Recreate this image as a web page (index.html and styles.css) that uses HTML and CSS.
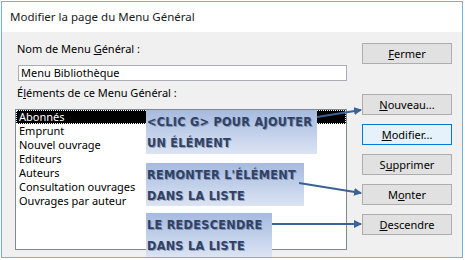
FILE: index.html
```html
<!DOCTYPE html>
<html lang="fr">
<head>
    <meta charset="UTF-8">
    <title>Modifier la page du Menu Général</title>
    <link rel="stylesheet" href="styles.css">
</head>
<body>
    <div class="window">
        <div class="titlebar">Modifier la page du Menu Général</div>
        <div class="dialog">
            <div class="left">
                <div class="lbl">Nom de Menu <u>G</u>énéral :</div>
                <div class="name">Menu Bibliothèque</div>
                <div class="lbl lbl-list">É<u>l</u>éments de ce Menu Général :</div>
                <ul class="list">
                    <li class="selected">Abonnés</li>
                    <li>Emprunt</li>
                    <li>Nouvel ouvrage</li>
                    <li>Editeurs</li>
                    <li>Auteurs</li>
                    <li>Consultation ouvrages</li>
                    <li>Ouvrages par auteur</li>
                </ul>
            </div>
            <div class="buttons">
                <button class="close"><u>F</u>ermer</button>
                <button class="first"><u>N</u>ouveau...</button>
                <button class="focused"><u>M</u>odifier...</button>
                <button>S<u>u</u>pprimer</button>
                <button>M<u>o</u>nter</button>
                <button><u>D</u>escendre</button>
            </div>
        </div>

        <!-- notes posées par-dessus la capture -->
        <div class="callout c1">&lt;CLIC G&gt; POUR AJOUTER<br>UN ÉLÉMENT</div>
        <div class="callout c2">REMONTER L'ÉLÉMENT<br>DANS LA LISTE</div>
        <div class="callout c3">LE REDESCENDRE<br>DANS LA LISTE</div>
        <svg class="arrows" width="465" height="260" viewBox="0 0 465 260">
            <defs>
                <marker id="head" markerWidth="8" markerHeight="8" refX="7" refY="4" orient="auto" markerUnits="userSpaceOnUse">
                    <path d="M0,0 L8,4 L0,8 Z" fill="#3b6294"/>
                </marker>
            </defs>
            <line x1="317" y1="117" x2="361" y2="110" stroke="#3b6294" stroke-width="2" marker-end="url(#head)"/>
            <line x1="299" y1="183" x2="361" y2="193" stroke="#3b6294" stroke-width="2" marker-end="url(#head)"/>
            <line x1="272" y1="224" x2="361" y2="224" stroke="#3b6294" stroke-width="2" marker-end="url(#head)"/>
        </svg>
    </div>
</body>
</html>
```

FILE: styles.css
```css
body {
    margin: 0;
    background-color: #fff;
    font-family: 'Noto Sans', sans-serif;
    font-size: 11px;
    color: #000;
}
.window {
    position: relative;
    margin: 1px 0 0 1px;
    width: 462px;
    height: 257px;
    box-sizing: border-box;
    border: 1px solid #70b4e4;
    display: flex;
    flex-direction: column;
}
.titlebar {
    height: 30px;
    line-height: 29px;
    padding-left: 8px;
    font-size: 11.5px;
    background-color: #fff;
    color: #1a1a1a;
}
.dialog {
    flex: 1;
    display: flex;
    background-color: #f0f0f0;
}
.left {
    width: 332px;
    padding: 9px 0 0 13px;
}
.lbl {
    height: 15px;
    line-height: 15px;
    padding-left: 2px;
}
.lbl-list {
    margin-top: 4px;
}
.name {
    margin: 9px 0 0 3px;
    height: 16px;
    line-height: 14px;
    box-sizing: border-box;
    border: 1px solid #abadb3;
    background-color: #fff;
    padding-left: 2px;
}
.list {
    list-style: none;
    margin: 9px 0 0 0;
    padding: 0;
    height: 141px;
    box-sizing: border-box;
    border: 1px solid #828790;
    background-color: #fff;
}
.list li {
    height: 14px;
    line-height: 14px;
    padding-left: 3px;
}
.list li.selected {
    background-color: #000;
    color: #fff;
    outline: 1px dotted #fff;
    outline-offset: -1px;
}
.buttons {
    margin-left: 15px;
    padding-top: 11px;
    display: flex;
    flex-direction: column;
    gap: 9px;
}
button {
    width: 90px;
    height: 21px;
    padding: 0;
    font-family: inherit;
    font-size: 11px;
    color: #000;
    background-color: #e1e1e1;
    border: 1px solid #adadad;
}
button.first {
    margin-top: 21px;
}
button.focused {
    background-color: #e5f1fb;
    border-color: #0078d7;
}
.callout {
    position: absolute;
    left: 144px;
    height: 44px;
    box-sizing: border-box;
    padding: 1px 0 0 1px;
    background: linear-gradient(#a6badf, #dbe4f3);
    font-family: 'DejaVu Sans Condensed', sans-serif;
    font-weight: bold;
    font-size: 12.5px;
    line-height: 21px;
    letter-spacing: 0.3px;
    color: #2f4266;
    text-shadow: 1px 1px 0 rgba(30, 40, 70, 0.35);
    white-space: nowrap;
}
.c1 {
    top: 108px;
    width: 171px;
}
.c2 {
    top: 161px;
    width: 158px;
    height: 43px;
}
.c3 {
    top: 211px;
    width: 126px;
}
.arrows {
    position: absolute;
    left: -2px;
    top: -2px;
    pointer-events: none;
}
```
